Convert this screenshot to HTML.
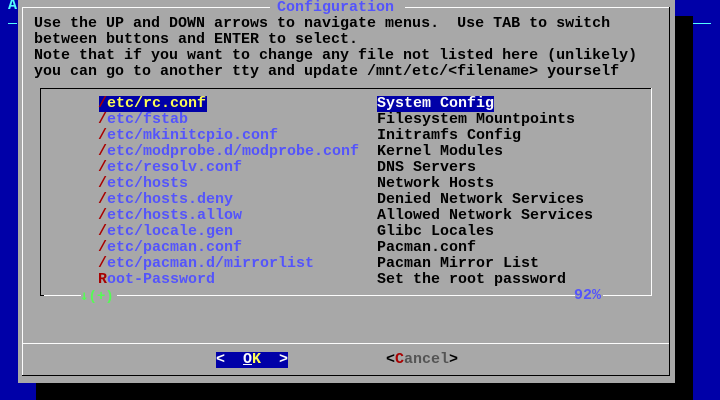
<!DOCTYPE html>
<html><head><meta charset="utf-8"><style>
body{margin:0;width:720px;height:400px;overflow:hidden;background:#0000a8;position:relative;font-family:"Liberation Mono","DejaVu Sans Mono",monospace;font-size:15px;font-weight:bold}
.a{position:absolute}
.t{position:absolute;white-space:pre;line-height:16px;height:16px}
.r{color:#a80000}.b{color:#5454fc}.k{color:#000}.w{color:#fcfcfc}.y{color:#fcfc54}.g{color:#54fc54}.d{color:#545454}
</style></head><body>
<div class="t w" style="left:8px;top:-2px;color:#54fcfc">A</div>
<div class="a" style="left:8px;top:23px;width:9px;height:1px;background:#54fcfc"></div>
<div class="a" style="left:675px;top:23px;width:36px;height:1px;background:#54fcfc"></div>
<div class="a" style="left:675px;top:16px;width:18px;height:384px;background:#000"></div>
<div class="a" style="left:36px;top:383px;width:657px;height:17px;background:#000"></div>
<div class="a" style="left:18px;top:0;width:657px;height:383px;background:#a8a8a8"></div>
<div class="a" style="left:22px;top:7px;width:248px;height:1px;background:#fcfcfc"></div>
<div class="a" style="left:405px;top:7px;width:264px;height:1px;background:#fcfcfc"></div>
<div class="a" style="left:22px;top:7px;width:1px;height:369px;background:#fcfcfc"></div>
<div class="a" style="left:669px;top:7px;width:1px;height:369px;background:#000"></div>
<div class="a" style="left:22px;top:375px;width:648px;height:1px;background:#000"></div>
<div class="a" style="left:23px;top:343px;width:646px;height:1px;background:#fcfcfc"></div>
<div class="t b" style="left:277px;top:0">Configuration</div>
<div class="t k" style="left:34px;top:16px">Use the UP and DOWN arrows to navigate menus.  Use TAB to switch</div>
<div class="t k" style="left:34px;top:32px">between buttons and ENTER to select.</div>
<div class="t k" style="left:34px;top:48px">Note that if you want to change any file not listed here (unlikely)</div>
<div class="t k" style="left:34px;top:64px">you can go to another tty and update /mnt/etc/&lt;filename&gt; yourself</div>
<div class="a" style="left:40px;top:88px;width:612px;height:1px;background:#000"></div>
<div class="a" style="left:40px;top:88px;width:1px;height:208px;background:#000"></div>
<div class="a" style="left:651px;top:88px;width:1px;height:208px;background:#fcfcfc"></div>
<div class="a" style="left:40px;top:295px;width:4px;height:1px;background:#000"></div>
<div class="a" style="left:44px;top:295px;width:608px;height:1px;background:#fcfcfc"></div>
<div class="a" style="left:99px;top:96px;width:108px;height:16px;background:#0000a8"></div>
<div class="a" style="left:377px;top:96px;width:117px;height:16px;background:#0000a8"></div>
<div class="t" style="left:98px;top:96px"><span class="r">/</span><span class="y">etc/rc.conf</span></div>
<div class="t w" style="left:377px;top:96px">System Config</div>
<div class="t b" style="left:98px;top:112px"><span class="r">/</span>etc/fstab</div>
<div class="t b" style="left:98px;top:128px"><span class="r">/</span>etc/mkinitcpio.conf</div>
<div class="t b" style="left:98px;top:144px"><span class="r">/</span>etc/modprobe.d/modprobe.conf</div>
<div class="t b" style="left:98px;top:160px"><span class="r">/</span>etc/resolv.conf</div>
<div class="t b" style="left:98px;top:176px"><span class="r">/</span>etc/hosts</div>
<div class="t b" style="left:98px;top:192px"><span class="r">/</span>etc/hosts.deny</div>
<div class="t b" style="left:98px;top:208px"><span class="r">/</span>etc/hosts.allow</div>
<div class="t b" style="left:98px;top:224px"><span class="r">/</span>etc/locale.gen</div>
<div class="t b" style="left:98px;top:240px"><span class="r">/</span>etc/pacman.conf</div>
<div class="t b" style="left:98px;top:256px"><span class="r">/</span>etc/pacman.d/mirrorlist</div>
<div class="t b" style="left:98px;top:272px"><span class="r">R</span>oot-Password</div>
<div class="t k" style="left:377px;top:112px">Filesystem Mountpoints</div>
<div class="t k" style="left:377px;top:128px">Initramfs Config</div>
<div class="t k" style="left:377px;top:144px">Kernel Modules</div>
<div class="t k" style="left:377px;top:160px">DNS Servers</div>
<div class="t k" style="left:377px;top:176px">Network Hosts</div>
<div class="t k" style="left:377px;top:192px">Denied Network Services</div>
<div class="t k" style="left:377px;top:208px">Allowed Network Services</div>
<div class="t k" style="left:377px;top:224px">Glibc Locales</div>
<div class="t k" style="left:377px;top:240px">Pacman.conf</div>
<div class="t k" style="left:377px;top:256px">Pacman Mirror List</div>
<div class="t k" style="left:377px;top:272px">Set the root password</div>
<div class="a" style="left:81px;top:290px;width:36px;height:10px;background:#a8a8a8"></div>
<div class="t g" style="left:80px;top:288px;font-size:14px"><span style="font-family:'DejaVu Sans Mono',monospace">↓</span>(+)</div>
<div class="a" style="left:575px;top:290px;width:28px;height:10px;background:#a8a8a8"></div>
<div class="t b" style="left:574px;top:288px">92%</div>
<div class="a" style="left:216px;top:352px;width:72px;height:16px;background:#0000a8"></div>
<div class="t w" style="left:216px;top:352px">&lt;  <span style="text-decoration:underline">O</span><span class="y">K</span>  &gt;</div>
<div class="t k" style="left:386px;top:352px">&lt;<span class="r">C</span><span class="d">ancel</span>&gt;</div>
</body></html>
